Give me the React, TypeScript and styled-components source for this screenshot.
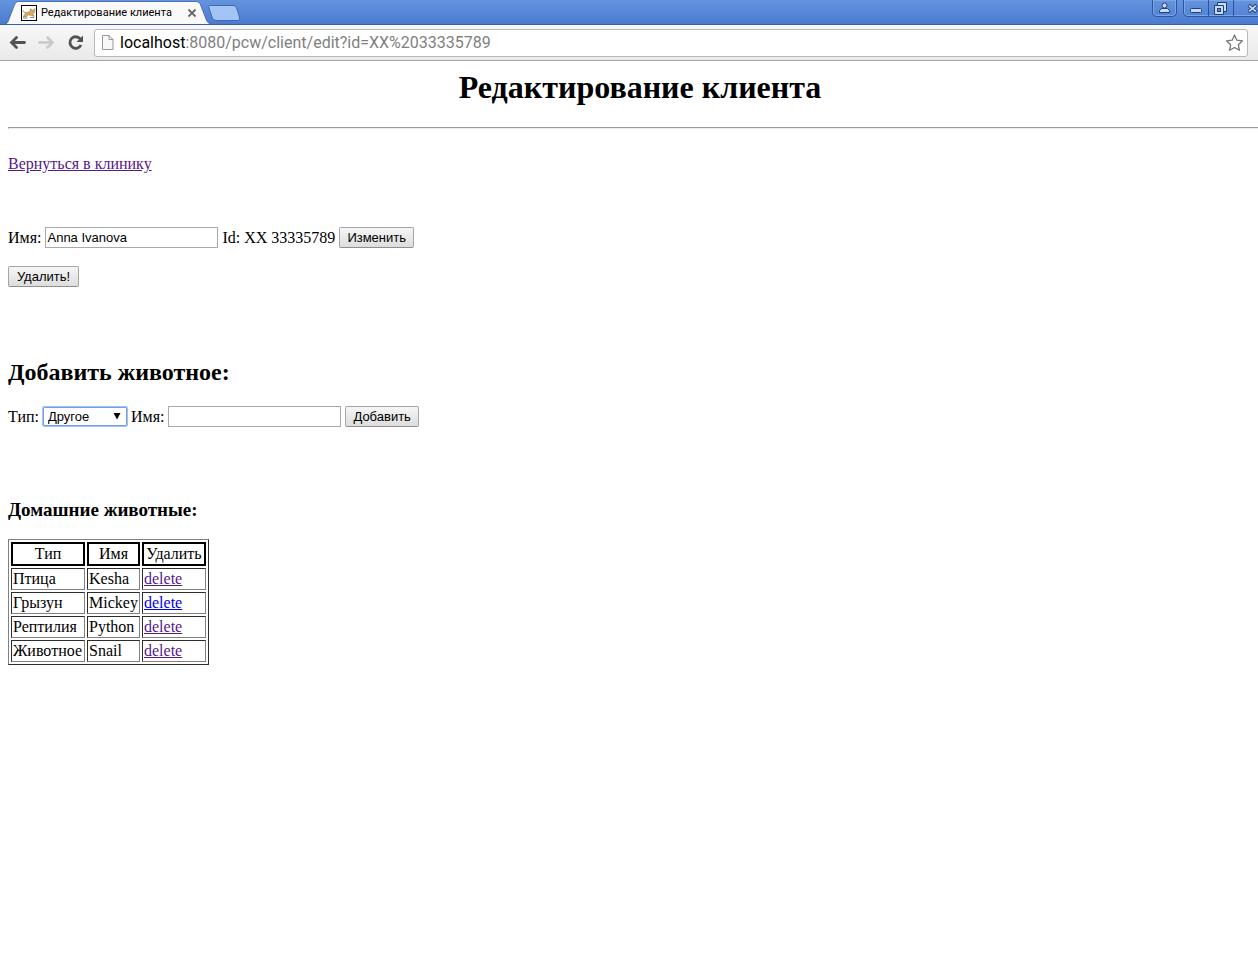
import React from "react";
import styled, { createGlobalStyle } from "styled-components";

const GlobalStyle = createGlobalStyle`
  * { box-sizing: border-box; }
  body {
    margin: 0;
    background: #fff;
    color: #000;
    font: 16px/18px "Liberation Serif", "Times New Roman", serif;
    overflow-x: hidden;
  }
`;

const TabStrip = styled.header`
  display: flex;
  justify-content: space-between;
  align-items: flex-start;
  height: 25px;
  padding-left: 4px;
  background: linear-gradient(#6494dd, #4a7bd0);
  border-bottom: 1px solid #3a5f9f;
  overflow: hidden;
`;

const Tabs = styled.div`
  display: flex;
`;

const Tab = styled.div`
  position: relative;
  display: flex;
  align-items: center;
  width: 208px;
  height: 25px;
  padding: 0 15px 0 17px;
`;

const TabShape = styled.svg`
  position: absolute;
  inset: 0;
`;

const TabTitle = styled.span`
  position: relative;
  flex: 1;
  margin-left: 4px;
  font: 11px/14px Roboto, sans-serif;
  white-space: nowrap;
`;

const Favicon = styled.svg`
  position: relative;
`;

const PlainButton = styled.button`
  position: relative;
  display: flex;
  align-items: center;
  justify-content: center;
  flex: none;
  padding: 0;
  border: 0;
  background: none;
`;

const NewTabButton = styled(PlainButton)`
  height: 25px;
  margin-left: -6px;
`;

const WindowControls = styled.div`
  display: flex;
  gap: 6px;
  margin-right: -14px;
`;

const ControlGroup = styled.div`
  display: flex;
  height: 17px;
  border: 1px solid #2d549d;
  border-top: 0;
  border-radius: 0 0 5px 5px;
  box-shadow: inset 0 0 0 1px #7da5e5;
`;

const ControlButton = styled(PlainButton)<{ $width: number }>`
  width: ${(p) => p.$width}px;
  height: 16px;
  & + & {
    border-left: 1px solid #2d549d;
  }
`;

const Toolbar = styled.nav`
  display: flex;
  align-items: center;
  height: 36px;
  padding: 0 10px 0 8px;
  background: linear-gradient(#f8f8f8, #e9e9e9);
  border-bottom: 1px solid #a3a3a3;
`;

const NavButtons = styled.div`
  display: flex;
  gap: 9px;
  margin-right: 8px;
`;

const AddressBar = styled.div`
  display: flex;
  align-items: center;
  flex: 1;
  height: 28px;
  padding: 0 4px 0 6px;
  border: 1px solid #b9b9b9;
  border-radius: 3px;
  background: #fff;
`;

const Address = styled.div`
  flex: 1;
  margin-left: 6px;
  color: #808080;
  font: 16px/22px Roboto, sans-serif;
  white-space: nowrap;
`;

const Host = styled.span`
  color: #000;
`;

const Page = styled.main`
  margin: 8px -14px 8px 8px;
`;

const Title = styled.h1`
  margin: 0 0 21px;
  font-size: 32px;
  line-height: 37px;
  text-align: center;
`;

const Rule = styled.hr`
  margin: 0;
  border: 1px inset #eee;
`;

const BackLine = styled.p`
  margin: 26px 0 54px;
`;

const Link = styled.a<{ $fresh?: boolean }>`
  color: ${(p) => (p.$fresh ? "#0000ee" : "#551a8b")};
  text-decoration: underline;
`;

const FormRow = styled.form`
  display: flex;
  align-items: center;
  gap: 4px;
  height: 21px;
`;

const RemoveRow = styled(FormRow)`
  margin-top: 18px;
`;

const TextInput = styled.input`
  width: 173px;
  height: 21px;
  padding: 1px;
  border: 1px solid #a9a9a9;
  background: #fff;
  color: #000;
  font: 13px/15px "Liberation Sans", Arial, sans-serif;
`;

const Button = styled.button`
  min-width: 71px;
  height: 21px;
  padding: 0 7px;
  border: 1px solid #a6a6a6;
  border-bottom-color: #8f8f8f;
  border-radius: 2px;
  background: linear-gradient(#f6f6f6, #dddddd);
  color: #000;
  font: 13px/15px "Liberation Sans", Arial, sans-serif;
`;

const SelectBox = styled.span`
  position: relative;
  display: flex;
`;

const Select = styled.select`
  appearance: none;
  width: 84px;
  height: 19px;
  padding: 0 20px 0 4px;
  border: 1px solid #7b9fe6;
  border-radius: 1px;
  outline: 1px solid #9dc0fa;
  background: #fff;
  color: #000;
  font: 13px/15px "Liberation Sans", Arial, sans-serif;
`;

const SelectArrow = styled.svg`
  position: absolute;
  top: 6px;
  right: 6px;
  pointer-events: none;
`;

const AddHeading = styled.h2`
  margin: 72px 0 20px;
  font-size: 24px;
  line-height: 27px;
`;

const PetsHeading = styled.h3`
  margin: 72px 0 19px;
  font-size: 19px;
  line-height: 21px;
`;

const PetTable = styled.table`
  border: 1px outset #808080;
  border-collapse: separate;
  border-spacing: 2px;
`;

const HeadCell = styled.th<{ $width: number }>`
  width: ${(p) => p.$width}px;
  padding: 1px;
  border: 2px solid #000;
  font-weight: 400;
`;

const Cell = styled.td`
  padding: 1px;
  border: 1px inset #808080;
`;

const pets = [
  { kind: "Птица", name: "Kesha" },
  { kind: "Грызун", name: "Mickey", fresh: true },
  { kind: "Рептилия", name: "Python" },
  { kind: "Животное", name: "Snail" },
];

const glyph = { fill: "#c9daf6", stroke: "#1f3f7d", strokeWidth: 1 };

function BrowserBar() {
  return (
    <>
      <TabStrip>
        <Tabs>
          <Tab>
            <TabShape width="208" height="25" viewBox="0 0 208 25" aria-hidden="true">
              <path d="M0 25C3 24 4 22 5 19L10 6C11 3 12 1.500 15 1.500H192C195 1.500 196 3 197 6L202 19C203 22 205 24 208 25Z" fill="#f9f9f9" stroke="#4a72b8" />
              <path d="M2 24.500H206" stroke="#f9f9f9" />
            </TabShape>
            <Favicon width="16" height="16" viewBox="0 0 16 16" aria-hidden="true">
              <rect x=".5" y=".5" width="15" height="15" fill="#fff" stroke="#000" />
              <path d="M2 12L4 9L7 7L9 6.500L9.500 3.500L11 5H12.500L14 3.500L13.500 7.500L11.500 9L13.500 11.500L10.500 10.500L7.500 10L5 12Z" fill="#dba95a" stroke="#8b7042" strokeWidth=".5" />
              <path d="M2 5.500L3.500 7.500L5.500 8M2 13H6.500M9 12.500H13" fill="none" stroke="#777" strokeWidth=".9" />
            </Favicon>
            <TabTitle>Редактирование клиента</TabTitle>
            <PlainButton type="button" aria-label="Закрыть вкладку">
              <svg width="10" height="10" viewBox="0 0 10 10">
                <path d="M1.500 1.500L8.500 8.500M8.500 1.500L1.500 8.500" stroke="#696969" strokeWidth="1.800" />
              </svg>
            </PlainButton>
          </Tab>
          <NewTabButton type="button" aria-label="Новая вкладка">
            <svg width="36" height="25" viewBox="0 0 36 25">
              <path d="M4 5.500H27C29 5.500 30 6.500 31 9L33.500 17C34 19.500 33 20.500 31 20.500H11C8 20.500 7 19.500 6 17L3 8C2.500 6.500 2.500 5.500 4 5.500Z" fill="#a2c5f5" stroke="#4068ad" />
            </svg>
          </NewTabButton>
        </Tabs>
        <WindowControls>
          <ControlGroup>
            <ControlButton $width={23} type="button" aria-label="Профиль">
              <svg width="11" height="12" viewBox="0 0 11 12" {...glyph}>
                <path d="M.5 10.500V8.500L2.500 6.500H8.500L10.500 8.500V10.500Z" />
                <circle cx="5.500" cy="3.500" r="2.500" />
              </svg>
            </ControlButton>
          </ControlGroup>
          <ControlGroup>
            <ControlButton $width={24} type="button" aria-label="Свернуть">
              <svg width="12" height="14" viewBox="0 0 12 14" {...glyph}>
                <rect x=".5" y="7.500" width="11" height="4" rx="1" />
              </svg>
            </ControlButton>
            <ControlButton $width={25} type="button" aria-label="Развернуть">
              <svg width="14" height="14" viewBox="0 0 14 14" {...glyph}>
                <path d="M3.500 1.500H12.500V10.500H3.500Z" />
                <path d="M.5 4.500H9.500V13.500H.5Z" />
                <rect x="3.500" y="7.500" width="3" height="3" fill="#5b8ad7" />
              </svg>
            </ControlButton>
            <ControlButton $width={38} type="button" aria-label="Закрыть">
              <svg width="11" height="11" viewBox="0 0 13 11">
                <path d="M2 1.500L11 9.500M11 1.500L2 9.500" stroke="#1f3f7d" strokeWidth="4" />
                <path d="M2.500 2L10.500 9M10.500 2L2.500 9" stroke="#c9daf6" strokeWidth="2" />
              </svg>
            </ControlButton>
          </ControlGroup>
        </WindowControls>
      </TabStrip>
      <Toolbar>
        <NavButtons>
          <PlainButton type="button" aria-label="Назад">
            <svg width="20" height="20" viewBox="0 0 20 20">
              <path d="M16.500 9.500H4M8.500 4.500L3.500 9.500L8.500 14.500" fill="none" stroke="#525252" strokeWidth="2.800" strokeLinecap="round" />
            </svg>
          </PlainButton>
          <PlainButton type="button" aria-label="Вперёд">
            <svg width="20" height="20" viewBox="0 0 20 20">
              <path d="M2.500 9.500H15M10.500 4.500L15.500 9.500L10.500 14.500" fill="none" stroke="#c9c9c9" strokeWidth="2.600" strokeLinecap="round" />
            </svg>
          </PlainButton>
          <PlainButton type="button" aria-label="Обновить">
            <svg width="20" height="20" viewBox="0 0 20 20">
              <path d="M15 12A5.800 5.800 0 1 1 14.200 5.800" fill="none" stroke="#525252" strokeWidth="2.800" />
              <path d="M17 2.500V9H10.500Z" fill="#525252" />
            </svg>
          </PlainButton>
        </NavButtons>
        <AddressBar>
          <svg width="13" height="16" viewBox="0 0 13 16" aria-hidden="true">
            <path d="M1.500 .5H8L12 4.500V14.500H1.500Z" fill="#f8f8f8" stroke="#999" />
            <path d="M8 .5V4.500H12" fill="none" stroke="#999" />
          </svg>
          <Address>
            <Host>localhost</Host>:8080/pcw/client/edit?id=XX%2033335789
          </Address>
          <PlainButton type="button" aria-label="Добавить в закладки">
            <svg width="18" height="18" viewBox="0 0 18 18">
              <path d="M9.500 1L11.800 6.200L17.500 6.800L13.300 10.700L14.500 16.300L9.500 13.500L4.500 16.300L5.700 10.700L1.500 6.800L7.200 6.200Z" fill="#fff" stroke="#777" strokeWidth="1.300" strokeLinejoin="round" />
            </svg>
          </PlainButton>
        </AddressBar>
      </Toolbar>
    </>
  );
}

export default function App() {
  const stay = (e: React.FormEvent) => e.preventDefault();
  return (
    <>
      <GlobalStyle />
      <BrowserBar />
      <Page>
        <Title>Редактирование клиента</Title>
        <Rule />
        <BackLine>
          <Link href="#clinic">Вернуться в клинику</Link>
        </BackLine>
        <FormRow onSubmit={stay}>
          <label htmlFor="client-name">Имя:</label>
          <TextInput id="client-name" type="text" defaultValue="Anna Ivanova" />
          <span>Id: XX 33335789</span>
          <Button type="submit">Изменить</Button>
        </FormRow>
        <RemoveRow onSubmit={stay}>
          <Button type="submit">Удалить!</Button>
        </RemoveRow>
        <AddHeading>Добавить животное:</AddHeading>
        <FormRow onSubmit={stay}>
          <label htmlFor="pet-kind">Тип:</label>
          <SelectBox>
            <Select id="pet-kind" defaultValue="Другое">
              <option>Другое</option>
            </Select>
            <SelectArrow width="8" height="7" viewBox="0 0 8 7" aria-hidden="true">
              <path d="M.5 0H7.500L4 6.500Z" />
            </SelectArrow>
          </SelectBox>
          <label htmlFor="pet-name">Имя:</label>
          <TextInput id="pet-name" type="text" />
          <Button type="submit">Добавить</Button>
        </FormRow>
        <PetsHeading>Домашние животные:</PetsHeading>
        <PetTable>
          <thead>
            <tr>
              <HeadCell $width={74}>Тип</HeadCell>
              <HeadCell $width={53}>Имя</HeadCell>
              <HeadCell $width={64}>Удалить</HeadCell>
            </tr>
          </thead>
          <tbody>
            {pets.map((pet) => (
              <tr key={pet.name}>
                <Cell>{pet.kind}</Cell>
                <Cell>{pet.name}</Cell>
                <Cell>
                  <Link href={`#delete-${pet.name}`} $fresh={pet.fresh}>
                    delete
                  </Link>
                </Cell>
              </tr>
            ))}
          </tbody>
        </PetTable>
      </Page>
    </>
  );
}
